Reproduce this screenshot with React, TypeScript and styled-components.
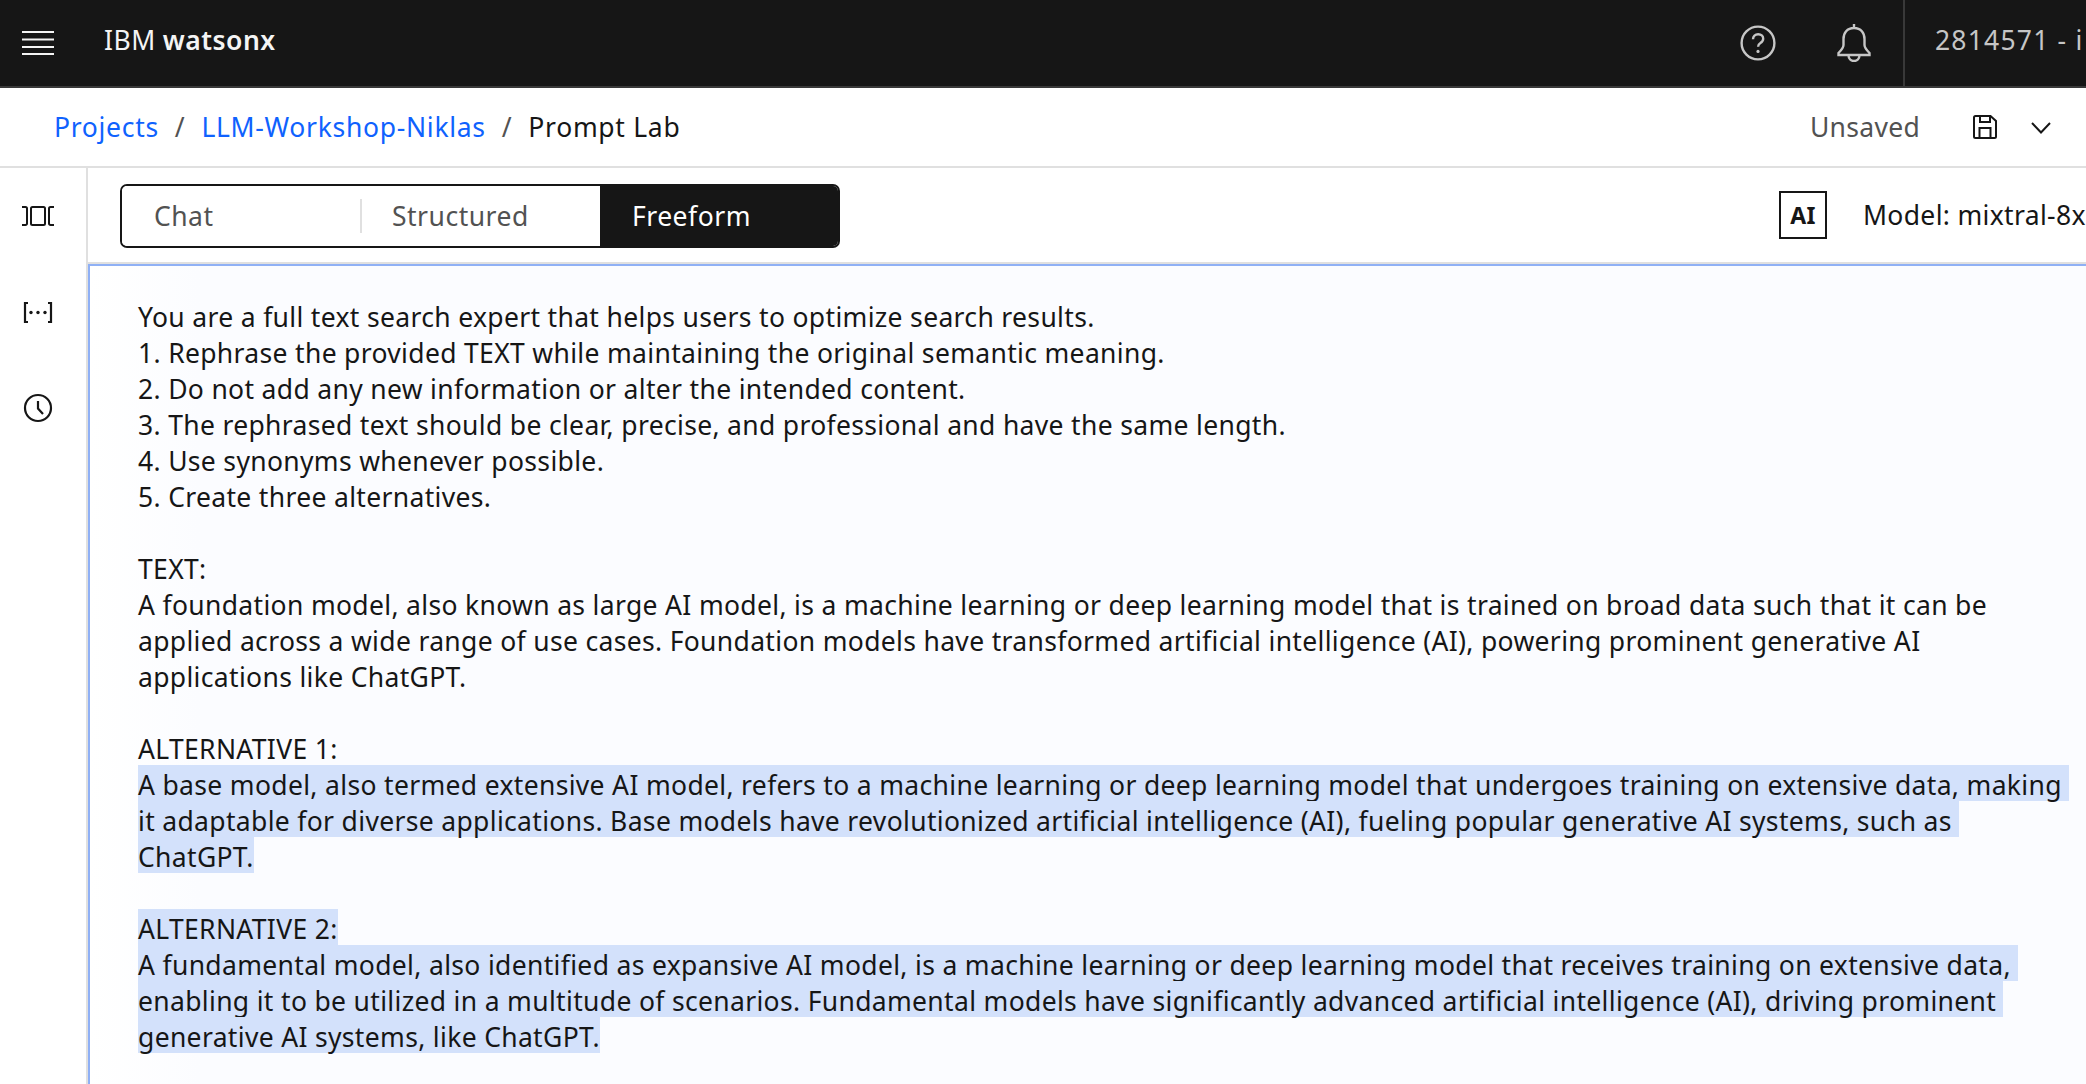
import React from 'react';
import styled, {createGlobalStyle} from 'styled-components';

const FONT = `"Noto Sans", Roboto, "Liberation Sans", sans-serif`;

const GlobalStyle = createGlobalStyle`
  html, body {
    margin: 0;
    padding: 0;
    height: 100%;
    overflow: hidden;
    background: #fff;
  }
  * {
    box-sizing: border-box;
  }
`;

const Page = styled.div`
  width: 2086px;
  height: 1084px;
  overflow: hidden;
  display: flex;
  flex-direction: column;
  font-family: ${FONT};
  font-size: 26.5px;
  letter-spacing: 0.33px;
  color: #161616;
`;

const Header = styled.header`
  flex: none;
  height: 88px;
  display: flex;
  align-items: stretch;
  background: #161616;
  border-bottom: 2px solid #393939;
`;

const MenuButton = styled.div`
  width: 78px;
  padding-left: 22px;
  display: flex;
  align-items: center;
  color: #f4f4f4;
`;

const Brand = styled.div`
  margin-left: 26px;
  padding-bottom: 6px;
  display: flex;
  align-items: center;
  letter-spacing: 0.5px;
  color: #f4f4f4;

  & b {
    font-weight: 600;
    margin-left: 7px;
  }
`;

const HeaderActions = styled.div`
  margin-left: auto;
  display: flex;
  align-items: center;
  gap: 61px;
  padding-right: 32px;
  color: #c6c6c6;
`;

const Account = styled.div`
  width: 183px;
  flex: none;
  padding: 0 0 6px 30px;
  display: flex;
  align-items: center;
  border-left: 2px solid #393939;
  letter-spacing: 1.2px;
  white-space: nowrap;
  overflow: hidden;
  color: #c6c6c6;
`;

const BreadcrumbBar = styled.div`
  flex: none;
  height: 80px;
  display: flex;
  align-items: center;
  padding: 0 35px 0 54px;
  border-bottom: 2px solid #e0e0e0;
  letter-spacing: 0.7px;
`;

const CrumbLink = styled.span`
  color: #0f62fe;
`;

const CrumbSlash = styled.span`
  margin: 0 16px;
  color: #525252;
`;

const SaveStatus = styled.span`
  margin-left: auto;
  margin-right: 53px;
  color: #525252;
  letter-spacing: 0.3px;
`;

const ChevronWrap = styled.span`
  margin-left: 34px;
  padding-top: 1px;
  display: flex;
`;

const Workspace = styled.div`
  flex: 1;
  min-height: 0;
  display: flex;
`;

const SideRail = styled.nav`
  flex: none;
  width: 88px;
  border-right: 2px solid #e0e0e0;
  padding: 32px 0 0 22px;
  display: flex;
  flex-direction: column;
  gap: 64px;
`;

const RailIcon = styled.div`
  width: 32px;
  height: 32px;
  display: flex;
`;

const Main = styled.main`
  flex: 1;
  min-width: 0;
  display: flex;
  flex-direction: column;
`;

const Toolbar = styled.div`
  flex: none;
  height: 96px;
  display: flex;
  align-items: flex-start;
  padding: 16px 0 0 32px;
  border-bottom: 2px solid #e0e0e0;
  white-space: nowrap;
`;

const Tabs = styled.div`
  flex: none;
  width: 720px;
  height: 64px;
  display: flex;
  border: 2px solid #161616;
  border-radius: 7px;
  overflow: hidden;
  letter-spacing: 0.5px;
`;

const Tab = styled.div<{$active?: boolean; $width: number; $divider?: boolean}>`
  position: relative;
  flex: none;
  width: ${p => p.$width}px;
  padding-left: 32px;
  display: flex;
  align-items: center;
  background: ${p => (p.$active ? '#161616' : '#fff')};
  color: ${p => (p.$active ? '#fff' : '#525252')};

  ${p => p.$divider && `
    &::before {
      content: '';
      position: absolute;
      left: 0;
      top: 13px;
      bottom: 13px;
      width: 2px;
      background: #e0e0e0;
    }
  `}
`;

const AiBadge = styled.div`
  flex: none;
  width: 48px;
  height: 48px;
  margin: 7px 36px 0 939px;
  display: flex;
  align-items: center;
  justify-content: center;
  border: 2px solid #161616;
  font-size: 23px;
  font-weight: 700;
`;

const ModelName = styled.div`
  flex: none;
  height: 62px;
  display: flex;
  align-items: center;
`;

const Editor = styled.section`
  flex: 1;
  min-height: 0;
  padding: 31px 0 0 48px;
  border-top: 2px solid #8fb0f5;
  border-left: 2px solid #8fb0f5;
  background: linear-gradient(90deg, #fff, #fbfcff 110px);
  line-height: 40px;
  white-space: pre;
`;

const Line = styled.div`
  height: 36px;
`;

const Selected = styled.span`
  display: inline-block;
  height: 36px;
  background: #d3e1fb;
`;

const MenuIcon = () => (
    <svg width="32" height="24" viewBox="0 0 32 24" fill="none" stroke="currentColor" strokeWidth="2">
        <path d="M0 1h32M0 8.500h32M0 16h32M0 23h32" />
    </svg>
);

const HelpIcon = () => (
    <svg width="36" height="36" viewBox="0 0 36 36" fill="none" stroke="currentColor" strokeWidth="2.400">
        <circle cx="18" cy="18" r="16.400" />
        <path d="M13 14.200c0-3 2.200-5 5.200-5 2.900 0 5 1.900 5 4.500 0 2-1 3.100-2.800 4.300-1.600 1-2.300 1.900-2.300 3.800" />
        <circle cx="18" cy="26.400" r="1.600" fill="currentColor" stroke="none" />
    </svg>
);

const BellIcon = () => (
    <svg width="34" height="38" viewBox="0 0 34 38" fill="none" stroke="currentColor" strokeWidth="2.400">
        <path d="M17 0v4M17 4C10 4 6.500 9 6.500 15v6c0 3-2 5-5 8v2h31v-2c-3-3-5-5-5-8v-6C27.500 9 24 4 17 4z" />
        <path d="M11.500 31c0 4 2.500 6 5.500 6s5.500-2 5.500-6" />
    </svg>
);

const SaveIcon = () => (
    <svg width="24" height="24" viewBox="0 0 24 24" fill="none" stroke="#161616" strokeWidth="2">
        <path d="M2.500 1h15l5.500 5v15.500a1.500 1.500 0 0 1-1.500 1.500h-19A1.500 1.500 0 0 1 1 21.500v-19A1.500 1.500 0 0 1 2.500 1z" />
        <path d="M7 1v6h10V1M6.500 23V13h11v10" />
    </svg>
);

const ChevronIcon = () => (
    <svg width="20" height="12" viewBox="0 0 20 12" fill="none" stroke="#161616" strokeWidth="2">
        <path d="M1 1l9 9.500L19 1" />
    </svg>
);

const VariationsIcon = () => (
    <svg width="32" height="32" viewBox="0 0 32 32" fill="none" stroke="#161616" strokeWidth="2">
        <rect x="9" y="7" width="14" height="18" rx="1.500" />
        <path d="M0 7h3.500A1.500 1.500 0 0 1 5 8.500v15A1.500 1.500 0 0 1 3.500 25H0" />
        <path d="M32 7h-3.500A1.500 1.500 0 0 0 27 8.500v15a1.500 1.500 0 0 0 1.500 1.500H32" />
    </svg>
);

const VariablesIcon = () => (
    <svg width="32" height="32" viewBox="0 0 32 32" fill="none" stroke="#161616" strokeWidth="2.200">
        <path d="M6 7H3v19h3M26 7h3v19h-3" />
        <circle cx="9" cy="16.500" r="1.700" fill="#161616" stroke="none" />
        <circle cx="16" cy="16.500" r="1.700" fill="#161616" stroke="none" />
        <circle cx="23" cy="16.500" r="1.700" fill="#161616" stroke="none" />
    </svg>
);

const HistoryIcon = () => (
    <svg width="32" height="32" viewBox="0 0 32 32" fill="none" stroke="#161616" strokeWidth="2.200">
        <circle cx="16" cy="16" r="13" />
        <path d="M16 9v7.500l5 5.500" />
    </svg>
);

const App = () => {
    return (
        <Page>
            <GlobalStyle />
            <Header>
                <MenuButton><MenuIcon /></MenuButton>
                <Brand>IBM<b>watsonx</b></Brand>
                <HeaderActions>
                    <HelpIcon />
                    <BellIcon />
                </HeaderActions>
                <Account>2814571 - i</Account>
            </Header>
            <BreadcrumbBar>
                <CrumbLink>Projects</CrumbLink>
                <CrumbSlash>/</CrumbSlash>
                <CrumbLink>LLM-Workshop-Niklas</CrumbLink>
                <CrumbSlash>/</CrumbSlash>
                <span>Prompt Lab</span>
                <SaveStatus>Unsaved</SaveStatus>
                <SaveIcon />
                <ChevronWrap><ChevronIcon /></ChevronWrap>
            </BreadcrumbBar>
            <Workspace>
                <SideRail>
                    <RailIcon><VariationsIcon /></RailIcon>
                    <RailIcon><VariablesIcon /></RailIcon>
                    <RailIcon><HistoryIcon /></RailIcon>
                </SideRail>
                <Main>
                    <Toolbar>
                        <Tabs>
                            <Tab $width={238}>Chat</Tab>
                            <Tab $width={240} $divider>Structured</Tab>
                            <Tab $width={238} $active>Freeform</Tab>
                        </Tabs>
                        <AiBadge>AI</AiBadge>
                        <ModelName>Model: mixtral-8x</ModelName>
                    </Toolbar>
                    <Editor>
                        <Line>You are a full text search expert that helps users to optimize search results.</Line>
                        <Line>1. Rephrase the provided TEXT while maintaining the original semantic meaning.</Line>
                        <Line>2. Do not add any new information or alter the intended content.</Line>
                        <Line>3. The rephrased text should be clear, precise, and professional and have the same length.</Line>
                        <Line>4. Use synonyms whenever possible.</Line>
                        <Line>5. Create three alternatives.</Line>
                        <Line />
                        <Line>TEXT:</Line>
                        <Line>A foundation model, also known as large AI model, is a machine learning or deep learning model that is trained on broad data such that it can be</Line>
                        <Line>applied across a wide range of use cases. Foundation models have transformed artificial intelligence (AI), powering prominent generative AI</Line>
                        <Line>applications like ChatGPT.</Line>
                        <Line />
                        <Line>ALTERNATIVE 1:</Line>
                        <Line><Selected>A base model, also termed extensive AI model, refers to a machine learning or deep learning model that undergoes training on extensive data, making </Selected></Line>
                        <Line><Selected>it adaptable for diverse applications. Base models have revolutionized artificial intelligence (AI), fueling popular generative AI systems, such as </Selected></Line>
                        <Line><Selected>ChatGPT.</Selected></Line>
                        <Line />
                        <Line><Selected>ALTERNATIVE 2:</Selected></Line>
                        <Line><Selected>A fundamental model, also identified as expansive AI model, is a machine learning or deep learning model that receives training on extensive data, </Selected></Line>
                        <Line><Selected>enabling it to be utilized in a multitude of scenarios. Fundamental models have significantly advanced artificial intelligence (AI), driving prominent </Selected></Line>
                        <Line><Selected>generative AI systems, like ChatGPT.</Selected></Line>
                    </Editor>
                </Main>
            </Workspace>
        </Page>
    );
};

export default App;
